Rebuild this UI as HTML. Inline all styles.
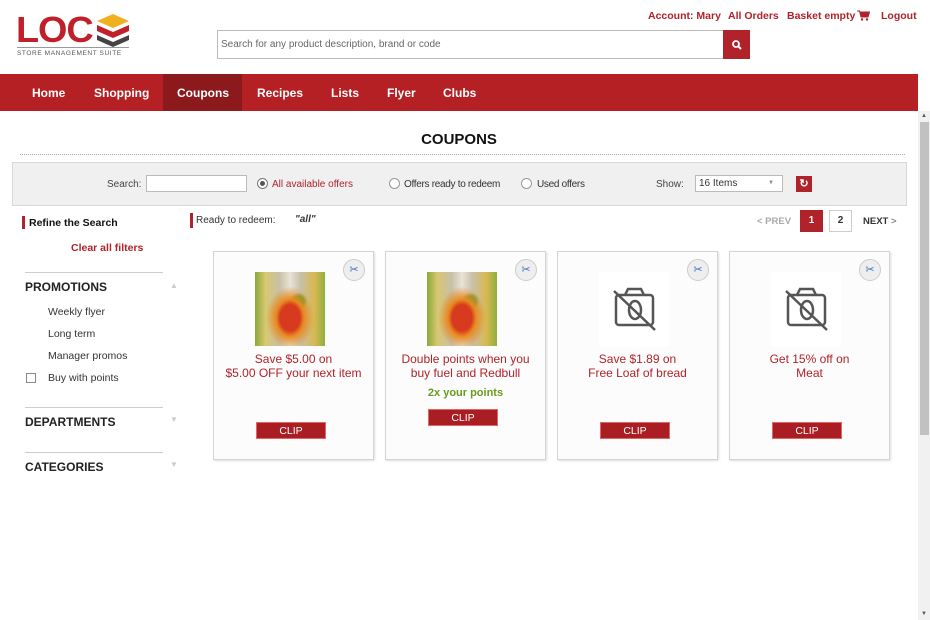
<!DOCTYPE html>
<html><head><style>
*{margin:0;padding:0;box-sizing:border-box}
body{width:930px;height:620px;overflow:hidden;background:#fff;font-family:"Liberation Sans",Arial,sans-serif;position:relative;font-size:11px;color:#333}
.a{position:absolute}
.red{color:#b0232a}
.nav{left:0;top:74px;width:918px;height:37px;background:#b52025}
.nav span{position:absolute;top:12px;color:#fff;font-weight:bold;font-size:12px}
.card{position:absolute;top:251px;width:161px;height:209px;background:#fcfcfc;border:1px solid #d4d4d4;box-shadow:1px 1px 2px #ddd}
.card .img{position:absolute;left:41px;top:20px;width:70px;height:74px}
.photo{background:radial-gradient(ellipse at 50% 62%,#d83a20 0 10px,#e88a20 14px,transparent 24px),radial-gradient(circle at 62% 40%,#50a030 0 5px,transparent 9px),linear-gradient(90deg,#8aa838 0,#d8c870 15%,#c8c0a8 35%,#e8e4d8 50%,#c8c0a8 65%,#d8b850 85%,#90b040 100%)}
.card .t{position:absolute;left:0;width:100%;top:100px;text-align:center;color:#b0232a;font-size:12px;line-height:14px}
.clip{position:absolute;left:42px;width:70px;height:17px;background:#aa1e23;color:#fff;text-align:center;font-size:10.5px;line-height:16px;border:1px solid #d66}
.sc{position:absolute;right:8px;top:7px;width:22px;height:22px;border-radius:50%;background:#eee;border:1px solid #ccc;color:#3a6fc0;font-size:11px;text-align:center;line-height:20px}
.side{position:absolute;left:48px;font-size:10.5px;color:#333}
.hl{position:absolute;left:25px;width:138px;height:1px;background:#ccc}
.h{position:absolute;left:25px;font-weight:bold;font-size:12px;color:#222}
.chev{position:absolute;left:170px;color:#ccc;font-size:8px}
.tl{position:absolute;top:10px;font-size:10.5px;font-weight:bold;color:#b0232a}
.fb{font-size:10px}
</style></head><body>
<!-- logo -->
<div class="a" style="left:16px;top:13px;font:bold 36px 'Liberation Sans',sans-serif;color:#c0202a;letter-spacing:-1px;line-height:34px;transform:scaleX(1.05);transform-origin:left">LOC</div>
<svg class="a" style="left:95px;top:14px" width="36" height="34" viewBox="0 0 36 34"><polygon points="18,0 34,7 18,14 2,7" fill="#f0b020"/><polygon points="2,11 18,18 34,11 34,17 18,24 2,17" fill="#c0202a"/><polygon points="2,21 18,28 34,21 34,26 18,33 2,26" fill="#444"/></svg>
<div class="a" style="left:17px;top:47px;width:112px;height:1px;background:#999"></div>
<div class="a" style="left:17px;top:50px;font-size:6.5px;color:#555;letter-spacing:.6px">STORE MANAGEMENT SUITE</div>
<!-- top links -->
<div class="tl" style="left:648px">Account: Mary</div>
<div class="tl" style="left:728px">All Orders</div>
<div class="tl" style="left:787px">Basket empty</div>
<svg class="a" style="left:857px;top:10px" width="13" height="11" viewBox="0 0 13 11"><path d="M0 1H2.5L4 7H11L12.5 2H3" fill="#b0232a" stroke="#b0232a" stroke-width="1"/><circle cx="5" cy="9.5" r="1.2" fill="#b0232a"/><circle cx="10" cy="9.5" r="1.2" fill="#b0232a"/></svg>
<div class="tl" style="left:881px">Logout</div>
<!-- search -->
<div class="a" style="left:217px;top:30px;width:507px;height:29px;border:1px solid #bbb;background:#fff;padding:8px 3px;font-size:10px;color:#666">Search for any product description, brand or code</div>
<div class="a" style="left:723px;top:30px;width:27px;height:29px;background:#b0232a"><svg style="position:absolute;left:9px;top:10px" width="10" height="10" viewBox="0 0 10 10"><circle cx="4" cy="4" r="3" fill="none" stroke="#fff" stroke-width="1.8"/><line x1="6" y1="6" x2="9" y2="9" stroke="#fff" stroke-width="2"/></svg></div>
<div class="a nav"><div class="a" style="left:163px;top:0;width:79px;height:37px;background:#8c1a1d"></div>
<span style="left:32px">Home</span><span style="left:94px">Shopping</span><span style="left:177px">Coupons</span><span style="left:257px">Recipes</span><span style="left:331px">Lists</span><span style="left:387px">Flyer</span><span style="left:443px">Clubs</span></div>
<!-- scrollbar -->
<div class="a" style="left:918px;top:111px;width:12px;height:509px;background:#f1f1f1"></div>
<div class="a" style="left:920px;top:122px;width:9px;height:313px;background:#c1c1c1"></div>
<div class="a" style="left:921px;top:113px;font-size:6px;color:#555">▲</div>
<div class="a" style="left:921px;top:611px;font-size:6px;color:#555">▼</div>
<!-- title -->
<div class="a" style="left:0;width:918px;top:131px;text-align:center;font-weight:bold;font-size:15px;color:#111">COUPONS</div>
<div class="a" style="left:20px;top:154px;width:885px;border-top:1px dotted #aaa"></div>
<!-- filter bar -->
<div class="a" style="left:12px;top:162px;width:895px;height:44px;background:#f0f0f0;border:1px solid #d8d8d8"></div>
<div class="a fb" style="left:107px;top:179px;color:#444">Search:</div>
<div class="a" style="left:146px;top:175px;width:101px;height:17px;background:#fff;border:1px solid #bbb"></div>
<div class="a" style="left:257px;top:178px;width:11px;height:11px;border:1px solid #777;border-radius:50%;background:#fff"><div style="margin:2px;width:5px;height:5px;border-radius:50%;background:#555"></div></div>
<div class="a red fb" style="left:272px;top:179px">All available offers</div>
<div class="a" style="left:389px;top:178px;width:11px;height:11px;border:1px solid #999;border-radius:50%;background:#fff"></div>
<div class="a fb" style="left:404px;top:179px;letter-spacing:-.3px">Offers ready to redeem</div>
<div class="a" style="left:521px;top:178px;width:11px;height:11px;border:1px solid #999;border-radius:50%;background:#fff"></div>
<div class="a fb" style="left:537px;top:179px;letter-spacing:-.3px">Used offers</div>
<div class="a fb" style="left:656px;top:179px;color:#444">Show:</div>
<div class="a" style="left:695px;top:175px;width:88px;height:17px;background:#fff;border:1px solid #bbb;padding:2px 3px;font-size:10px">16 Items<span style="position:absolute;right:8px;top:4px;font-size:6px;color:#888">▼</span></div>
<div class="a" style="left:796px;top:176px;width:16px;height:16px;background:#b0232a;color:#fff;font-size:11px;text-align:center;line-height:16px;font-weight:bold">↻</div>
<!-- sidebar -->
<div class="a" style="left:22px;top:216px;width:3px;height:13px;background:#b0232a"></div>
<div class="a" style="left:29px;top:217px;font-weight:bold;color:#111;font-size:10.5px">Refine the Search</div>
<div class="a red" style="left:71px;top:242px;font-weight:bold;font-size:10.5px">Clear all filters</div>
<div class="hl" style="top:272px"></div><div class="h" style="top:280px">PROMOTIONS</div><div class="chev" style="top:281px">▲</div>
<div class="side" style="top:306px">Weekly flyer</div>
<div class="side" style="top:328px">Long term</div>
<div class="side" style="top:350px">Manager promos</div>
<div class="a" style="left:26px;top:373px;width:10px;height:10px;border:1px solid #888;background:#fff"></div>
<div class="side" style="top:372px">Buy with points</div>
<div class="hl" style="top:407px"></div><div class="h" style="top:415px">DEPARTMENTS</div><div class="chev" style="top:415px">▼</div>
<div class="hl" style="top:452px"></div><div class="h" style="top:460px">CATEGORIES</div><div class="chev" style="top:460px">▼</div>
<!-- ready to redeem -->
<div class="a" style="left:190px;top:213px;width:3px;height:15px;background:#b0232a"></div>
<div class="a" style="left:196px;top:215px;font-size:10px">Ready to redeem:</div>
<div class="a" style="left:295px;top:214px;font-style:italic;font-weight:bold;font-size:10px">"all"</div>
<!-- pagination -->
<div class="a" style="left:757px;top:216px;color:#aaa;font-weight:bold;font-size:9.5px">&lt; PREV</div>
<div class="a" style="left:800px;top:210px;width:23px;height:22px;background:#b0232a;color:#fff;font-weight:bold;text-align:center;line-height:22px;font-size:10px">1</div>
<div class="a" style="left:829px;top:210px;width:23px;height:22px;border:1px solid #ccc;background:#fff;font-weight:bold;text-align:center;line-height:20px;font-size:10px">2</div>
<div class="a" style="left:863px;top:216px;font-weight:bold;font-size:9.5px;color:#333">NEXT <span style="color:#888">&gt;</span></div>
<!-- cards -->
<div class="card" style="left:213px"><div class="sc">✂</div><div class="img photo"></div><div class="t">Save $5.00 on<br>$5.00 OFF your next item</div><div class="clip" style="top:170px">CLIP</div></div>
<div class="card" style="left:385px"><div class="sc">✂</div><div class="img photo"></div><div class="t">Double points when you<br>buy fuel and Redbull</div><div class="a" style="top:135px;width:100%;text-align:center;color:#6a9a20;font-weight:bold;font-size:11px">2x your points</div><div class="clip" style="top:157px">CLIP</div></div>
<div class="card" style="left:557px"><div class="sc">✂</div><div class="img" style="background:#fff"><svg width="70" height="74" viewBox="0 0 70 74"><rect x="17" y="23" width="37" height="30" rx="3" fill="none" stroke="#555" stroke-width="2.5"/><path d="M26 23 L29 17 H42 L45 23" fill="none" stroke="#555" stroke-width="2.5"/><ellipse cx="36" cy="38" rx="6" ry="9" fill="none" stroke="#555" stroke-width="2.5"/><line x1="15" y1="19" x2="56" y2="58" stroke="#555" stroke-width="2.5"/></svg></div><div class="t">Save $1.89 on<br>Free Loaf of bread</div><div class="clip" style="top:170px">CLIP</div></div>
<div class="card" style="left:729px"><div class="sc">✂</div><div class="img" style="background:#fff"><svg width="70" height="74" viewBox="0 0 70 74"><rect x="17" y="23" width="37" height="30" rx="3" fill="none" stroke="#555" stroke-width="2.5"/><path d="M26 23 L29 17 H42 L45 23" fill="none" stroke="#555" stroke-width="2.5"/><ellipse cx="36" cy="38" rx="6" ry="9" fill="none" stroke="#555" stroke-width="2.5"/><line x1="15" y1="19" x2="56" y2="58" stroke="#555" stroke-width="2.5"/></svg></div><div class="t">Get 15% off on<br>Meat</div><div class="clip" style="top:170px">CLIP</div></div>
</body></html>
